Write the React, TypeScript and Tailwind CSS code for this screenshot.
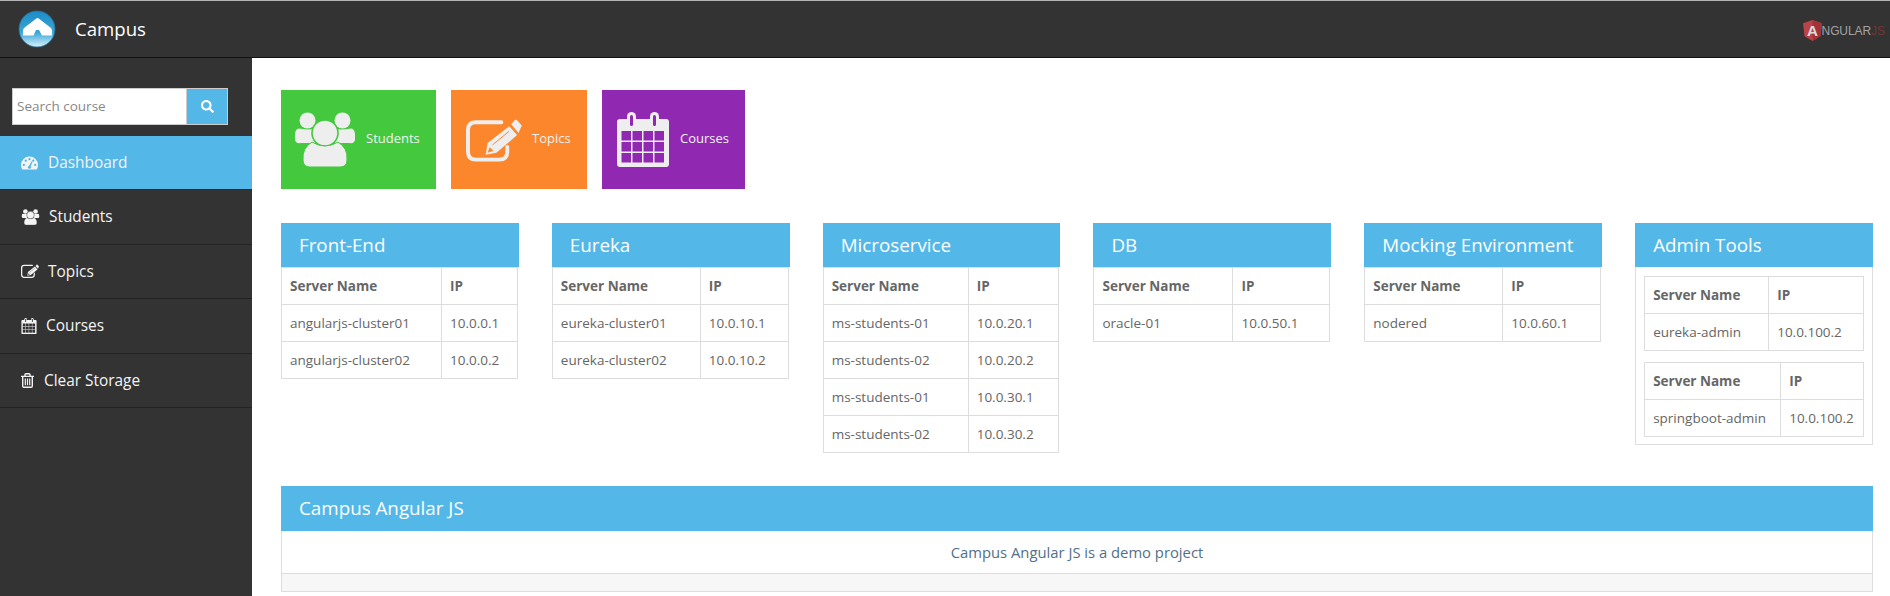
import { FaSearch } from "react-icons/fa";

const font = "font-['Open_Sans','Noto_Sans',sans-serif]";

function HomeLogo() {
  return (
    <svg viewBox="0 0 38 38" className="w-[38px] h-[38px]">
      <defs>
        <linearGradient id="logoFill" x1="0" y1="0" x2="0" y2="1">
          <stop offset="0" stopColor="#1b8cc6" />
          <stop offset="0.6" stopColor="#3ba6d8" />
          <stop offset="1" stopColor="#dcf2fa" />
        </linearGradient>
      </defs>
      <circle cx="19" cy="19" r="18" fill="url(#logoFill)" stroke="#2a6f92" strokeWidth="0.8" />
      <path d="M19.5 8 Q20.5 8 22 9.5 L33 18 Q34.5 19.5 33.8 25.5 H24 L21 20 H18 L15.5 25.5 H5.2 Q4.5 19.5 6 18 L17 9.5 Q18.5 8 19.5 8 Z" fill="#ffffff" />
    </svg>
  );
}

function AngularLogo() {
  return (
    <div className="flex items-center mr-[5px] mt-[3px] opacity-90">
      <svg viewBox="0 0 20 22" className="w-[19px] h-[21px]">
        <path d="M10 0 L20 3.5 L18.4 17 L10 22 L1.6 17 L0 3.5 Z" fill="#c8454c" />
        <path d="M10 0 L20 3.5 L18.4 17 L10 22 Z" fill="#ad3339" />
        <text x="10" y="17" textAnchor="middle" fontSize="16" fontWeight="700" fill="#eeeeee" fontFamily="Liberation Sans, sans-serif">A</text>
      </svg>
      <span className="font-['Liberation_Sans',sans-serif] text-[12px] tracking-[-0.1px] text-[#b0b0b0]">NGULAR</span>
      <span className="font-['Liberation_Sans',sans-serif] text-[12px] text-[#7f3636]">JS</span>
    </div>
  );
}

function GaugeIcon({ className }: { className: string }) {
  return (
    <svg viewBox="0 0 18 14" className={className}>
      <path d="M9 0 A9 9 0 0 0 0 9 Q0 12 1.6 14 H16.4 Q18 12 18 9 A9 9 0 0 0 9 0 Z" fill="currentColor" />
      <g fill="#53b7e8">
        <circle cx="3" cy="9" r="1.2" />
        <circle cx="5" cy="4.5" r="1.2" />
        <circle cx="9" cy="3" r="1.2" />
        <circle cx="15" cy="9" r="1.2" />
        <circle cx="13" cy="4.5" r="1.2" />
        <path d="M8 11 L11.5 5 L12.3 5.4 L10 11.5 Z" />
        <circle cx="9" cy="11.5" r="1.6" />
      </g>
    </svg>
  );
}

function UsersIcon({ className, bg }: { className: string; bg: string }) {
  return (
    <svg viewBox="0 0 60 55" className={className}>
      <g fill="currentColor">
        <circle cx="12.5" cy="8.5" r="8" />
        <circle cx="47.5" cy="8.5" r="8" />
        <path d="M4 16.5 Q0 17 0 23 V27 Q0 32 6 31 H20 V17 Q12 18 4 16.5 Z" />
        <path d="M56 16.5 Q60 17 60 23 V27 Q60 32 54 31 H40 V17 Q48 18 56 16.5 Z" />
        <circle cx="30" cy="21" r="13" stroke={bg} strokeWidth="1.6" />
        <path d="M17 30 Q30 38 43 30 Q53 36 52 48 Q52 55 45 55 H15 Q8 55 8 48 Q7 36 17 30 Z" stroke={bg} strokeWidth="1" />
      </g>
    </svg>
  );
}

function EditIcon({ className, bg }: { className: string; bg: string }) {
  return (
    <svg viewBox="0 0 57 44" className={className}>
      <path
        d="M36 4 H10 Q2 4 2 12 V34 Q2 42 10 42 H34 Q42 42 42 34 V29"
        fill="none"
        stroke="currentColor"
        strokeWidth="4"
        strokeLinecap="round"
      />
      <g fill="currentColor">
        <path d="M20 37 L22 25 L44 8 L52 17 L31 35 Z" />
        <path d="M46 6 L50 1.5 Q51 1 52 2 L56.5 7 Q57 8 56 9 L53.5 15 Z" />
      </g>
      <path d="M27 27 L44 13" stroke={bg} strokeWidth="1" />
      <path d="M22 35 L24 29.5 L28 33 Z" fill={bg} />
    </svg>
  );
}

function CalendarIcon({ className, bg }: { className: string; bg: string }) {
  const xs = [4.5, 15.5, 26.5, 37.5];
  const ys = [19, 30, 41];
  return (
    <svg viewBox="0 0 52 55" className={className}>
      <rect x="0" y="7" width="52" height="48" rx="3" fill="currentColor" />
      <rect x="10" y="0" width="9" height="15" rx="4.5" fill="currentColor" />
      <rect x="33" y="0" width="9" height="15" rx="4.5" fill="currentColor" />
      <rect x="13" y="3" width="3" height="11" rx="1.5" fill={bg} />
      <rect x="36" y="3" width="3" height="11" rx="1.5" fill={bg} />
      {ys.map((y) =>
        xs.map((x) => <rect key={`${x}-${y}`} x={x} y={y} width="9.5" height="9.5" fill={bg} />),
      )}
    </svg>
  );
}

function TrashIcon({ className }: { className: string }) {
  return (
    <svg viewBox="0 0 13 15" className={className}>
      <path
        d="M1.7 4 V13 Q1.7 14.2 2.9 14.2 H10.1 Q11.3 14.2 11.3 13 V4 M0 3.4 H13 M4 3.4 V1.6 Q4 0.7 5 0.7 H8 Q9 0.7 9 1.6 V3.4"
        fill="none"
        stroke="currentColor"
        strokeWidth="1.4"
      />
      <path d="M4.3 5.5 V12.3 M6.5 5.5 V12.3 M8.7 5.5 V12.3" stroke="currentColor" strokeWidth="1.2" />
    </svg>
  );
}

const navItems = [
  { label: "Students", gap: "gap-[9px]", icon: <UsersIcon className="w-[19px] h-[16px]" bg="#333333" /> },
  { label: "Topics", gap: "gap-[9px]", icon: <EditIcon className="w-[18px] h-[14px]" bg="#333333" /> },
  { label: "Courses", gap: "gap-[9px]", icon: <CalendarIcon className="w-[16px] h-[16px]" bg="#333333" /> },
  { label: "Clear Storage", gap: "gap-[10px]", icon: <TrashIcon className="w-[13px] h-[15px]" /> },
];

function ServerTable({ rows, nameWidth }: { rows: string[][]; nameWidth: string }) {
  return (
    <table className="w-full table-fixed border-collapse border border-[#ddd] text-[13.5px] leading-5 text-[#666]">
      <thead>
        <tr>
          <th className={`${nameWidth} border border-[#ddd] p-2 text-left font-bold`}>Server Name</th>
          <th className="border border-[#ddd] p-2 text-left font-bold">IP</th>
        </tr>
      </thead>
      <tbody>
        {rows.map((row, i) => (
          <tr key={i}>
            <td className="border border-[#ddd] p-2 whitespace-nowrap">{row[0]}</td>
            <td className="border border-[#ddd] p-2 whitespace-nowrap">{row[1]}</td>
          </tr>
        ))}
      </tbody>
    </table>
  );
}

const panels = [
  {
    title: "Front-End",
    nameWidth: "w-[160px]",
    rows: [
      ["angularjs-cluster01", "10.0.0.1"],
      ["angularjs-cluster02", "10.0.0.2"],
    ],
  },
  {
    title: "Eureka",
    nameWidth: "w-[148px]",
    rows: [
      ["eureka-cluster01", "10.0.10.1"],
      ["eureka-cluster02", "10.0.10.2"],
    ],
  },
  {
    title: "Microservice",
    nameWidth: "w-[145px]",
    rows: [
      ["ms-students-01", "10.0.20.1"],
      ["ms-students-02", "10.0.20.2"],
      ["ms-students-01", "10.0.30.1"],
      ["ms-students-02", "10.0.30.2"],
    ],
  },
  { title: "DB", nameWidth: "w-[139px]", rows: [["oracle-01", "10.0.50.1"]] },
  { title: "Mocking Environment", nameWidth: "w-[138px]", rows: [["nodered", "10.0.60.1"]] },
];

export default function App() {
  return (
    <div className={`${font} h-screen overflow-hidden flex flex-col bg-white`}>
      {/* Top bar */}
      <header className="h-[58px] shrink-0 flex items-center justify-between bg-[#333] border-t border-t-[#b5b5b5] border-b border-b-[#111] pl-[18px]">
        <div className="flex items-center gap-[19px]">
          <HomeLogo />
          <span className="text-[18.6px] text-white">Campus</span>
        </div>
        <AngularLogo />
      </header>

      <div className="flex flex-1 min-h-0">
        {/* Sidebar */}
        <aside className="w-[252px] shrink-0 bg-[#333] pt-[30px] text-[15.4px] text-[#f4f4f4]">
          <div className="flex h-[37px] ml-[12px] w-[216px] mb-[11px]">
            <input
              placeholder="Search course"
              className="w-[175px] border border-[#ccc] bg-white px-[4px] text-[13.5px] text-[#555] placeholder-[#888] outline-none"
            />
            <button className="flex-1 flex items-center justify-center bg-[#53b7e8] border border-[#ccc] border-l-0 text-white">
              <FaSearch className="w-[13px] h-[13px]" />
            </button>
          </div>
          <a className="flex items-center gap-[10px] h-[54px] pl-[21px] bg-[#53b7e8] border-b border-[#1e2a30]">
            <GaugeIcon className="w-[17px] h-[14px]" />
            <span>Dashboard</span>
          </a>
          {navItems.map((item) => (
            <a
              key={item.label}
              className={`flex items-center ${item.gap} h-[54.5px] pl-[21px] border-b border-[#222]`}
            >
              {item.icon}
              <span>{item.label}</span>
            </a>
          ))}
        </aside>

        {/* Main content */}
        <main className="flex-1 min-w-0 pl-[29px] pr-[17px] pt-[32px]">
          <div className="flex gap-[15px] text-[13px] text-[#f2f2f2]">
            <div className="flex items-center w-[155px] h-[99px] pl-[14px] gap-[11px] bg-[#44c83e]">
              <UsersIcon className="w-[60px] h-[55px] text-[#eeeeee]" bg="#44c83e" />
              <span className="-mt-[2px]">Students</span>
            </div>
            <div className="flex items-center w-[136px] h-[99px] pl-[15px] gap-[10px] bg-[#fb862c]">
              <EditIcon className="w-[56px] h-[44px] text-[#eeeeee]" bg="#fb862c" />
              <span className="-mt-[2px]">Topics</span>
            </div>
            <div className="flex items-center w-[143px] h-[99px] pl-[15px] gap-[11px] bg-[#9128b1]">
              <CalendarIcon className="w-[52px] h-[55px] text-[#eeeeee]" bg="#9128b1" />
              <span className="-mt-[2px]">Courses</span>
            </div>
          </div>

          <div className="grid grid-cols-6 gap-[33px] mt-[34px] items-start">
            {panels.map((panel) => (
              <section key={panel.title}>
                <h3 className="h-[44px] flex items-center pl-[18px] bg-[#53b7e8] text-[18.8px] text-white whitespace-nowrap">
                  {panel.title}
                </h3>
                <div className="pr-px">
                  <ServerTable rows={panel.rows} nameWidth={panel.nameWidth} />
                </div>
              </section>
            ))}
            <section>
              <h3 className="h-[44px] flex items-center pl-[18px] bg-[#53b7e8] text-[18.8px] text-white">
                Admin Tools
              </h3>
              <div className="border border-t-0 border-[#ddd] pt-[9px] px-[8px] pb-[7px] flex flex-col gap-[11px]">
                <ServerTable rows={[["eureka-admin", "10.0.100.2"]]} nameWidth="w-[124px]" />
                <ServerTable rows={[["springboot-admin", "10.0.100.2"]]} nameWidth="w-[136px]" />
              </div>
            </section>
          </div>

          <section className="mt-[33px]">
            <h3 className="h-[45px] flex items-center pl-[18px] bg-[#53b7e8] text-[18.8px] text-white">
              Campus Angular JS
            </h3>
            <div className="border-x border-[#ddd] h-[42px] flex items-center justify-center text-[14.8px] text-[#52708a]">
              Campus Angular JS is a demo project
            </div>
            <div className="h-[19px] bg-[#f7f7f7] border border-[#ddd]" />
          </section>
        </main>
      </div>
    </div>
  );
}
